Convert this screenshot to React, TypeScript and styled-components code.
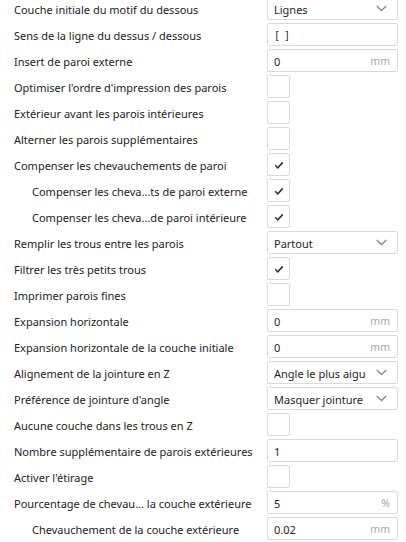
import React from "react";
import styled, { createGlobalStyle } from "styled-components";

const Global = createGlobalStyle`
  html, body { margin: 0; padding: 0; background: #ffffff; overflow: hidden; }
  body { font-family: "Noto Sans", "Open Sans", sans-serif; }
`;

const Panel = styled.div`
  width: 406px;
  height: 542px;
  overflow: hidden;
  background: #fff;
`;

const List = styled.div`
  display: flex;
  flex-direction: column;
  margin-top: -3px;
`;

const Row = styled.div`
  display: grid;
  grid-template-columns: 267px 131px;
  height: 26px;
  align-items: start;
`;

const Label = styled.div<{ $indent?: boolean }>`
  padding-left: ${(p) => (p.$indent ? 32 : 14)}px;
  font-size: 11px;
  line-height: 23px;
  padding-top: 1px;
  color: #222;
  white-space: nowrap;
  overflow: hidden;
`;

const Field = styled.div`
  box-sizing: border-box;
  height: 23px;
  border: 1px solid #d9d9d9;
  border-radius: 2px;
  background: #fff;
  display: flex;
  align-items: center;
  padding: 0 7px 0 6px;
  font-size: 11px;
  color: #1e1e1e;
  white-space: nowrap;
`;

const Value = styled.span`
  flex: 1;
  padding-top: 1px;
`;

const Unit = styled.span`
  color: #a8a8a8;
  font-size: 10.5px;
  padding-top: 1px;
`;

const Mono = styled.span`
  font-family: "DejaVu Sans Mono", monospace;
  font-size: 10px;
  letter-spacing: -1px;
  flex: 1;
  padding-top: 1px;
`;

const Chevron = styled.svg`
  width: 11px;
  height: 7px;
  margin-right: 3px;
  flex: none;
`;

const Check = styled.div`
  box-sizing: border-box;
  width: 23px;
  height: 23px;
  border: 1px solid #d9d9d9;
  border-radius: 2px;
  display: flex;
  align-items: center;
  justify-content: center;
`;

const Tick = styled.svg`
  width: 10px;
  height: 8px;
`;

type Item =
  | { label: string; indent?: boolean; kind: "select"; value: string }
  | { label: string; indent?: boolean; kind: "text"; value: string; unit?: string; mono?: boolean }
  | { label: string; indent?: boolean; kind: "check"; checked: boolean };

const items: Item[] = [
  { label: "Couche initiale du motif du dessous", kind: "select", value: "Lignes" },
  { label: "Sens de la ligne du dessus / dessous", kind: "text", value: "[ ]", mono: true },
  { label: "Insert de paroi externe", kind: "text", value: "0", unit: "mm" },
  { label: "Optimiser l'ordre d'impression des parois", kind: "check", checked: false },
  { label: "Extérieur avant les parois intérieures", kind: "check", checked: false },
  { label: "Alterner les parois supplémentaires", kind: "check", checked: false },
  { label: "Compenser les chevauchements de paroi", kind: "check", checked: true },
  { label: "Compenser les cheva...ts de paroi externe", indent: true, kind: "check", checked: true },
  { label: "Compenser les cheva...de paroi intérieure", indent: true, kind: "check", checked: true },
  { label: "Remplir les trous entre les parois", kind: "select", value: "Partout" },
  { label: "Filtrer les très petits trous", kind: "check", checked: true },
  { label: "Imprimer parois fines", kind: "check", checked: false },
  { label: "Expansion horizontale", kind: "text", value: "0", unit: "mm" },
  { label: "Expansion horizontale de la couche initiale", kind: "text", value: "0", unit: "mm" },
  { label: "Alignement de la jointure en Z", kind: "select", value: "Angle le plus aigu" },
  { label: "Préférence de jointure d'angle", kind: "select", value: "Masquer jointure" },
  { label: "Aucune couche dans les trous en Z", kind: "check", checked: false },
  { label: "Nombre supplémentaire de parois extérieures", kind: "text", value: "1" },
  { label: "Activer l'étirage", kind: "check", checked: false },
  { label: "Pourcentage de chevau... la couche extérieure", kind: "text", value: "5", unit: "%" },
  { label: "Chevauchement de la couche extérieure", indent: true, kind: "text", value: "0.02", unit: "mm" },
];

function Control({ item }: { item: Item }) {
  if (item.kind === "check") {
    return (
      <Check>
        {item.checked && (
          <Tick viewBox="0 0 10 8">
            <path d="M1.2 4.2 L3.8 6.8 L8.8 1.4" fill="none" stroke="#333" strokeWidth="1.6" />
          </Tick>
        )}
      </Check>
    );
  }
  if (item.kind === "select") {
    return (
      <Field>
        <Value>{item.value}</Value>
        <Chevron viewBox="0 0 11 7">
          <path d="M0.8 1 L5.5 5.6 L10.2 1" fill="none" stroke="#8a8a8a" strokeWidth="1.4" />
        </Chevron>
      </Field>
    );
  }
  return (
    <Field>
      {item.mono ? <Mono>{item.value}</Mono> : <Value>{item.value}</Value>}
      {item.unit && <Unit>{item.unit}</Unit>}
    </Field>
  );
}

export default function App() {
  return (
    <Panel>
      <Global />
      <List>
        {items.map((it, i) => (
          <Row key={i}>
            <Label $indent={it.indent}>{it.label}</Label>
            <Control item={it} />
          </Row>
        ))}
      </List>
    </Panel>
  );
}
